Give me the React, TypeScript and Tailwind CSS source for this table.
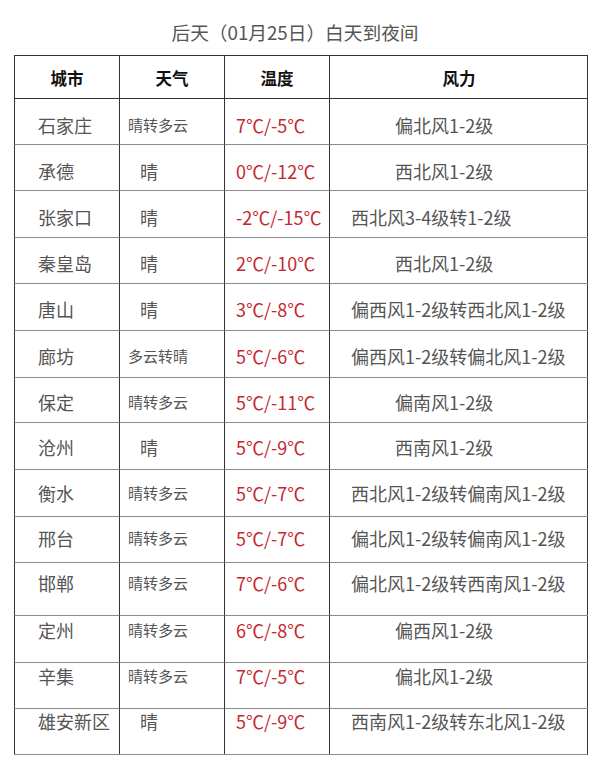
import React from 'react';

type Row = {
  city: string;
  weather: string;
  temp: string;
  wind: string;
  h: string;
  pt: string;
};

// row heights / text offsets follow the original screenshot, which drifts a bit
const rows: Row[] = [
  { city: '石家庄', weather: '晴转多云', temp: '7℃/-5℃', wind: '偏北风1-2级', h: 'h-[46px]', pt: 'pt-[14px]' },
  { city: '承德', weather: '晴', temp: '0℃/-12℃', wind: '西北风1-2级', h: 'h-[46px]', pt: 'pt-[14px]' },
  { city: '张家口', weather: '晴', temp: '-2℃/-15℃', wind: '西北风3-4级转1-2级', h: 'h-[47px]', pt: 'pt-[14px]' },
  { city: '秦皇岛', weather: '晴', temp: '2℃/-10℃', wind: '西北风1-2级', h: 'h-[46px]', pt: 'pt-[13px]' },
  { city: '唐山', weather: '晴', temp: '3℃/-8℃', wind: '偏西风1-2级转西北风1-2级', h: 'h-[47px]', pt: 'pt-[13px]' },
  { city: '廊坊', weather: '多云转晴', temp: '5℃/-6℃', wind: '偏西风1-2级转偏北风1-2级', h: 'h-[47px]', pt: 'pt-[13px]' },
  { city: '保定', weather: '晴转多云', temp: '5℃/-11℃', wind: '偏南风1-2级', h: 'h-[45px]', pt: 'pt-[12px]' },
  { city: '沧州', weather: '晴', temp: '5℃/-9℃', wind: '西南风1-2级', h: 'h-[47px]', pt: 'pt-[12px]' },
  { city: '衡水', weather: '晴转多云', temp: '5℃/-7℃', wind: '西北风1-2级转偏南风1-2级', h: 'h-[47px]', pt: 'pt-[11px]' },
  { city: '邢台', weather: '晴转多云', temp: '5℃/-7℃', wind: '偏北风1-2级转偏南风1-2级', h: 'h-[46px]', pt: 'pt-[9px]' },
  { city: '邯郸', weather: '晴转多云', temp: '7℃/-6℃', wind: '偏北风1-2级转西南风1-2级', h: 'h-[53px]', pt: 'pt-[8px]' },
  { city: '定州', weather: '晴转多云', temp: '6℃/-8℃', wind: '偏西风1-2级', h: 'h-[47px]', pt: 'pt-[2px]' },
  { city: '辛集', weather: '晴转多云', temp: '7℃/-5℃', wind: '偏北风1-2级', h: 'h-[46px]', pt: 'pt-[1px]' },
  { city: '雄安新区', weather: '晴', temp: '5℃/-9℃', wind: '西南风1-2级转东北风1-2级', h: 'h-[46px]', pt: 'pt-[0px]' },
];

const font = { fontFamily: '"Noto Sans CJK SC", "Liberation Sans", sans-serif' };

const cell = 'border-l border-t border-l-[#333] border-t-[#8c8c8c]';

export default function App() {
  return (
    <div className="w-[600px] h-[775px] bg-white" style={font}>
      <div className="h-[55px] pt-[19px] text-center pr-[10px] text-[18.7px] leading-[26px] text-[#555]">
        后天（01月25日）白天到夜间
      </div>

      <div className="ml-[14px] w-[574px] border-r border-b border-r-[#333] border-b-[#8c8c8c] grid grid-cols-[105px_105px_105px_259px]">
        {['城市', '天气', '温度', '风力'].map((t) => (
          <div
            key={t}
            className="h-[43px] border-l border-t border-[#333] border-b-0 flex items-center justify-center pt-[3px] text-[16.5px] font-bold text-[#111]"
          >
            {t}
          </div>
        ))}

        {rows.map((r, i) => {
          const single = r.weather.length === 1;
          const longWind = r.wind.length > 8;
          const top = i === 0 ? 'border-t-[#333]' : '';
          return (
            <React.Fragment key={r.city}>
              <div className={`${cell} ${top} ${r.h} ${r.pt} pl-[23px] text-[18px] leading-[24px] text-[#555]`}>
                {r.city}
              </div>
              <div
                className={`${cell} ${top} ${r.h} ${r.pt} text-[#555] ${
                  single ? 'pl-[20px] text-[18px] leading-[24px]' : 'pl-[8px] text-[15px] leading-[24px]'
                }`}
              >
                {r.weather}
              </div>
              <div className={`${cell} ${top} ${r.h} ${r.pt} pl-[11px] text-[18px] leading-[24px] text-[#c4282e]`}>
                {r.temp}
              </div>
              <div
                className={`${cell} ${top} ${r.h} ${r.pt} text-[18px] leading-[24px] text-[#555] whitespace-nowrap ${
                  longWind ? 'pl-[21px]' : 'pl-[65px]'
                }`}
              >
                {r.wind}
              </div>
            </React.Fragment>
          );
        })}
      </div>
    </div>
  );
}
